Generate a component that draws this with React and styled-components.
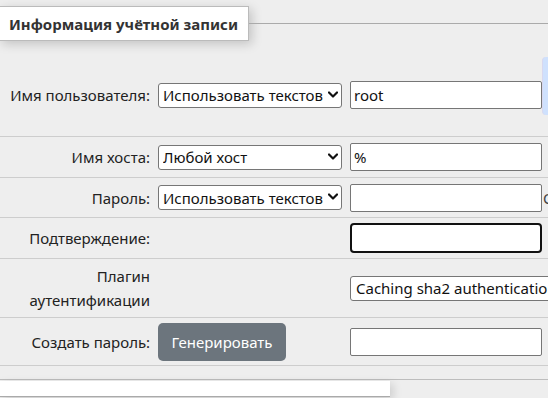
import React from "react";
import styled, { createGlobalStyle } from "styled-components";

const Global = createGlobalStyle`
  html, body { margin: 0; padding: 0; }
  body {
    background: #eeeeee;
    overflow: hidden;
    width: 548px;
    height: 398px;
    font-family: "Noto Sans", "Open Sans", sans-serif;
    color: #222;
  }
`;

const Page = styled.div`
  position: relative;
  width: 548px;
  height: 398px;
  overflow: hidden;
`;

const Header = styled.div`
  display: flex;
  align-items: center;
  margin-top: 6px;
`;

const Legend = styled.div`
  height: 33px;
  display: flex;
  align-items: center;
  padding: 0 10px 0 9px;
  margin-left: -1px;
  background: #fff;
  border: 1px solid #bbb;
  box-shadow: 3px 3px 10px rgba(0, 0, 0, 0.18);
  font-weight: 700;
  font-size: 15px;
  color: #333;
  white-space: nowrap;
`;

const HeaderLine = styled.div`
  flex: 1;
  height: 1px;
  background: #aaa;
  margin-top: -1px;
`;

const Table = styled.div`
  margin-top: 13px;
  display: flex;
  flex-direction: column;
`;

const Row = styled.div`
  display: grid;
  grid-template-columns: 158px 192px 193px 1fr;
  align-items: center;
  height: ${(p) => p.$h}px;
  border-bottom: 1px solid #cdcdcd;
  font-size: 15px;
`;

const Label = styled.div`
  text-align: right;
  padding-right: 8px;
  line-height: ${(p) => (p.$multi ? "24px" : "20px")};
  color: #222;
  white-space: nowrap;
`;

const SelectWrap = styled.div`
  position: relative;
  width: ${(p) => p.$w || 184}px;
  height: 25px;
`;

const Select = styled.select`
  appearance: none;
  -webkit-appearance: none;
  box-sizing: border-box;
  width: 100%;
  height: 100%;
  border: 1px solid #767676;
  border-radius: 3px;
  background: #fff;
  color: #111;
  font-family: inherit;
  font-size: 15px;
  padding: 0 18px 0 ${(p) => p.$pl || 4}px;
  margin: 0;
  outline: none;
`;

const Chevron = styled.svg`
  position: absolute;
  right: 4px;
  top: 8px;
  width: 10px;
  height: 8px;
  pointer-events: none;
`;

const Input = styled.input`
  box-sizing: border-box;
  width: 192px;
  height: ${(p) => (p.$focus ? 30 : 28)}px;
  border: ${(p) => (p.$focus ? "2px solid #111" : "1px solid #767676")};
  border-radius: ${(p) => (p.$focus ? 4 : 2)}px;
  background: #fff;
  font-family: inherit;
  font-size: 15px;
  color: #111;
  padding: 0 3px;
  margin: 0;
  outline: none;
`;

const Button = styled.button`
  width: 128px;
  height: 38px;
  border: none;
  border-radius: 5px;
  background: #6c757d;
  color: #fff;
  font-family: inherit;
  font-size: 15px;
  padding: 0;
  cursor: pointer;
`;

const Extra = styled.div`
  white-space: nowrap;
  color: #444;
  font-size: 15px;
`;

const Popup = styled.div`
  position: absolute;
  left: 542px;
  top: 57px;
  width: 20px;
  height: 58px;
  background: #cfe1fd;
  border-left: 1px solid #d8d8ef;
  border-radius: 4px;
`;

const FooterGap = styled.div`
  height: 13px;
  border-bottom: 1px solid #bdbdbd;
`;

const NextLegend = styled.div`
  width: 390px;
  height: 15px;
  margin-top: 1px;
  background: #fff;
  border-bottom: 1px solid #aaa;
  box-shadow: 3px 3px 10px rgba(0, 0, 0, 0.15);
`;

const Arrow = () => (
  <Chevron viewBox="0 0 10 8">
    <path d="M1 1.5 L5 5.5 L9 1.5" fill="none" stroke="#111" strokeWidth="2.2" strokeLinecap="round" strokeLinejoin="round" />
  </Chevron>
);

const Dropdown = ({ value, w, pl, arrow = true }) => (
  <SelectWrap $w={w}>
    <Select $pl={pl} defaultValue={value}>
      <option>{value}</option>
    </Select>
    {arrow && <Arrow />}
  </SelectWrap>
);

export default function App() {
  return (
    <>
      <Global />
      <Page>
        <Header>
          <Legend>Информация учётной записи</Legend>
          <HeaderLine />
        </Header>
        <Table>
          <Row $h={82}>
            <Label>Имя пользователя:</Label>
            <Dropdown value="Использовать текстов" />
            <Input defaultValue="root" />
            <div />
          </Row>
          <Row $h={40}>
            <Label>Имя хоста:</Label>
            <Dropdown value="Любой хост" />
            <Input defaultValue="%" />
            <div />
          </Row>
          <Row $h={39}>
            <Label>Пароль:</Label>
            <Dropdown value="Использовать текстов" />
            <Input />
            <Extra>Сила:</Extra>
          </Row>
          <Row $h={40}>
            <Label>Подтверждение:</Label>
            <div />
            <Input $focus />
            <div />
          </Row>
          <Row $h={58}>
            <Label $multi>
              Плагин
              <br />
              аутентификации
            </Label>
            <div />
            <Dropdown value="Caching sha2 authentication" w={260} pl={5} />
            <div />
          </Row>
          <Row $h={47}>
            <Label>Создать пароль:</Label>
            <div>
              <Button>Генерировать</Button>
            </div>
            <Input />
            <div />
          </Row>
        </Table>
        <FooterGap />
        <NextLegend />
        <Popup />
      </Page>
    </>
  );
}
